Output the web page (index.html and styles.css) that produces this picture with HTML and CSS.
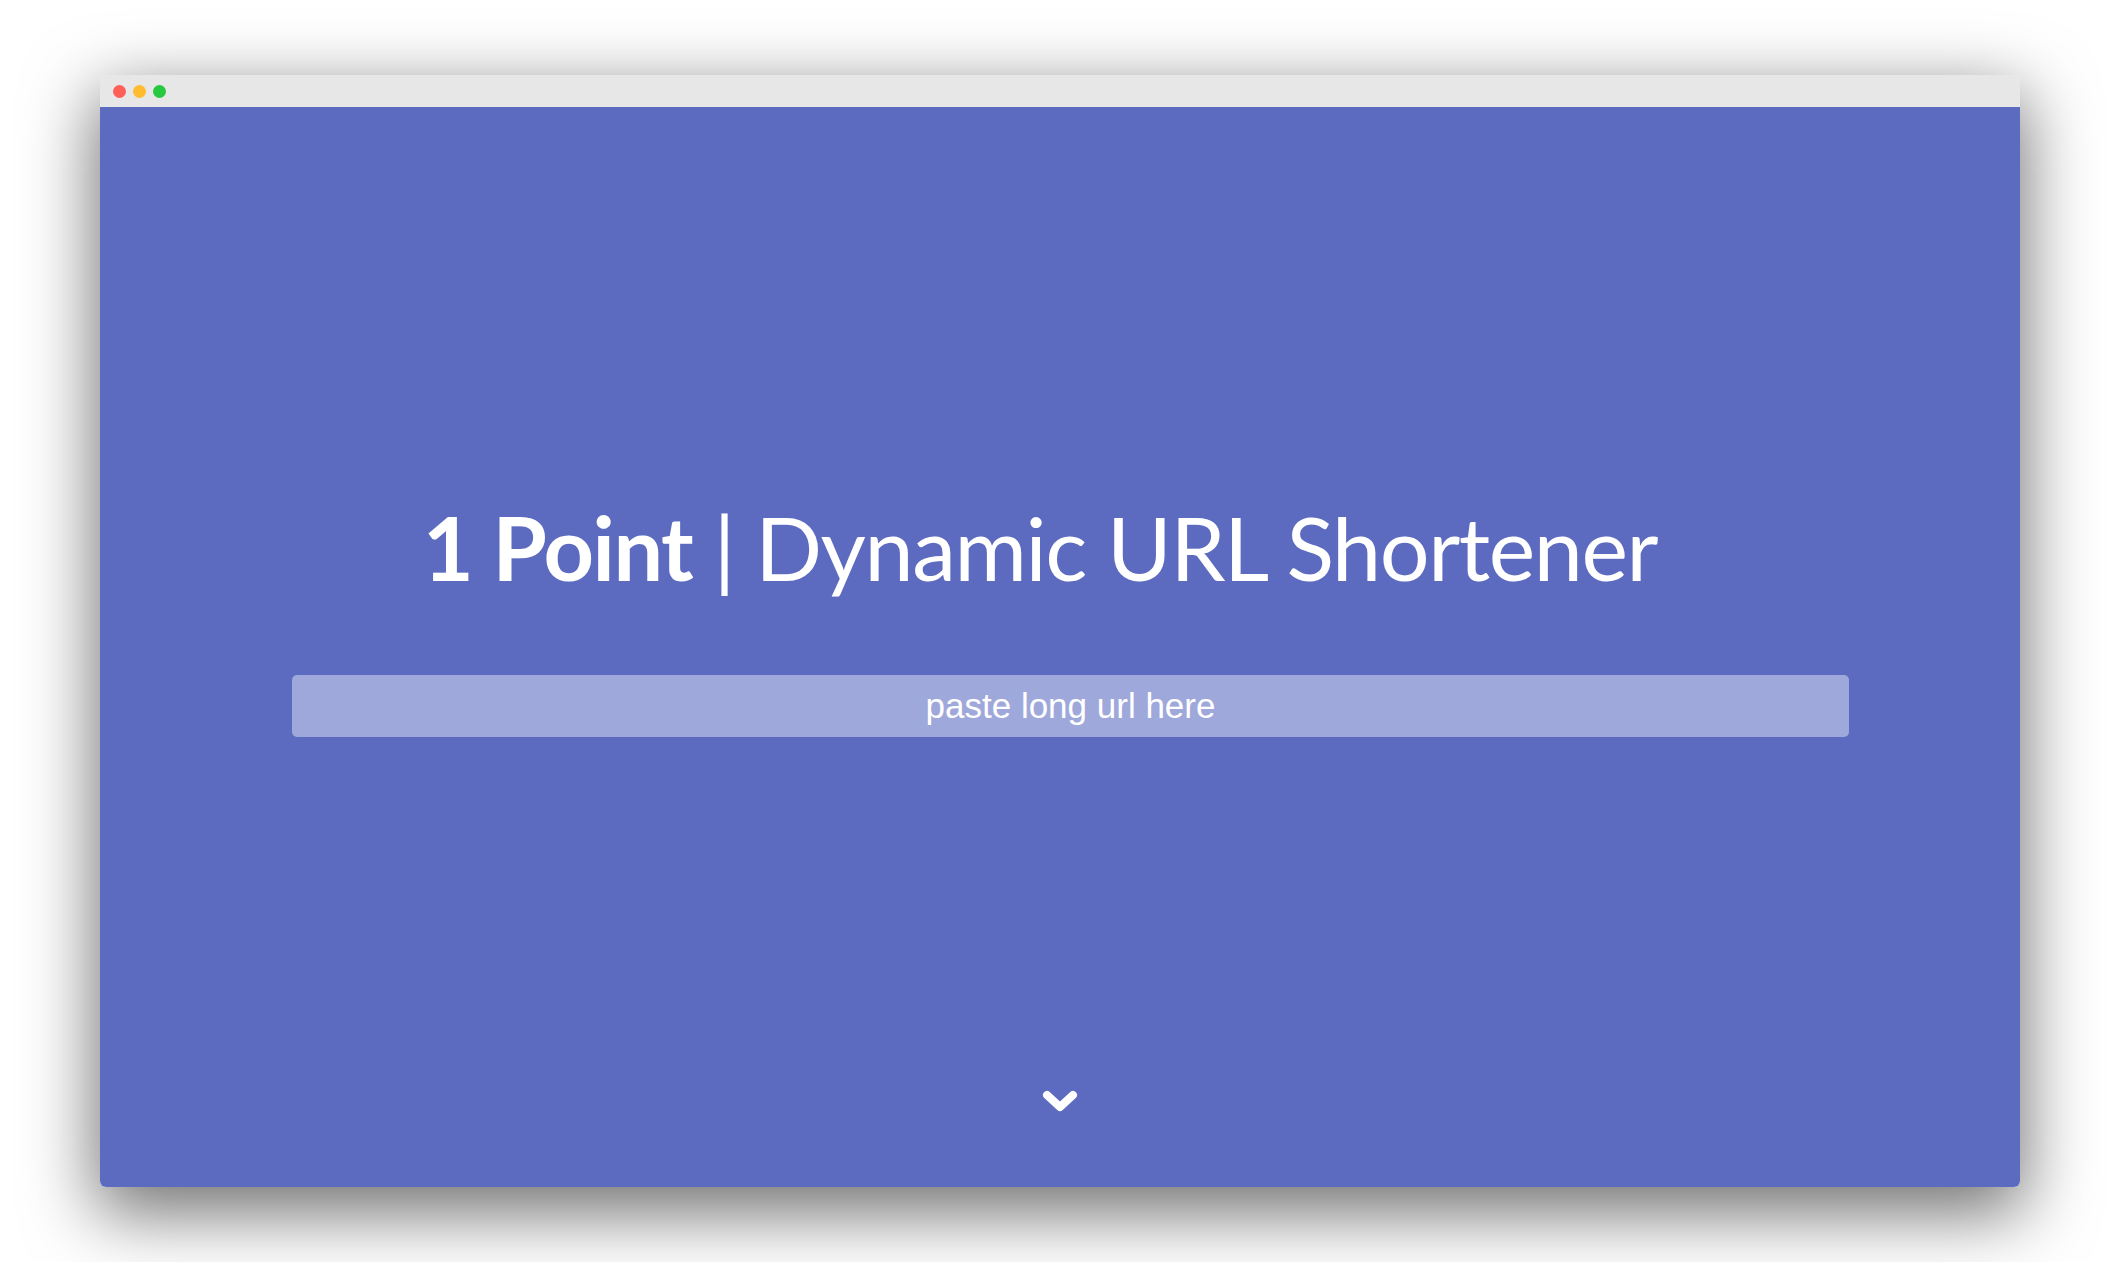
FILE: index.html
```html
<!DOCTYPE html>
<html lang="en">
<head>
<meta charset="utf-8">
<title>1 Point | Dynamic URL Shortener</title>
<link rel="stylesheet" href="styles.css">
</head>
<body>
<div class="window">
  <div class="titlebar">
    <span class="dot red"></span>
    <span class="dot yellow"></span>
    <span class="dot green"></span>
  </div>
  <main class="hero">
    <h1 class="title"><strong>1 Point</strong> | Dynamic URL Shortener</h1>
    <div class="url-box">paste long url here</div>
    <div class="spacer"></div>
    <svg class="chevron" width="36" height="24" viewBox="0 0 36 24" aria-hidden="true">
      <polyline points="5,5 18,17 31,5" fill="none" stroke="#fff" stroke-width="8" stroke-linecap="round" stroke-linejoin="round"/>
    </svg>
  </main>
</div>
</body>
</html>
```
FILE: styles.css
```css
html, body {
  margin: 0;
  padding: 0;
}
body {
  background: #ffffff;
  width: 2120px;
  height: 1262px;
  box-sizing: border-box;
  padding: 75px 100px;
  overflow: hidden;
}
.window {
  width: 1920px;
  height: 1112px;
  border-radius: 6px;
  overflow: hidden;
  box-shadow: 0 22px 70px 4px rgba(0, 0, 0, 0.56);
  display: flex;
  flex-direction: column;
}
.titlebar {
  height: 32px;
  background: #e7e7e7;
  display: flex;
  align-items: center;
  gap: 7px;
  padding-left: 13px;
  flex: none;
}
.dot {
  width: 13px;
  height: 13px;
  border-radius: 50%;
  display: block;
}
.red { background: #fe5f57; }
.yellow { background: #febc2e; }
.green { background: #28c840; }
.hero {
  flex: 1;
  background: #5c6bc0;
  display: flex;
  flex-direction: column;
  align-items: flex-start;
}
.title {
  margin: 380px 0 0 0;
  width: 1880px;
  text-align: center;
  font-family: "Lato", "Open Sans", sans-serif;
  font-weight: 400;
  font-size: 88px;
  line-height: 120px;
  color: #fff;
  letter-spacing: -1.4px;
}
.title strong {
  font-weight: 700;
}
.url-box {
  margin: 68px 0 0 192px;
  width: 1557px;
  height: 62px;
  box-sizing: border-box;
  border-radius: 5px;
  background: #9fa8da;
  color: #fff;
  font-family: "Liberation Sans", Arial, sans-serif;
  font-size: 35px;
  display: flex;
  align-items: center;
  justify-content: center;
}
.spacer {
  flex: 1;
}
.chevron {
  align-self: center;
  margin-bottom: 73px;
}
```
